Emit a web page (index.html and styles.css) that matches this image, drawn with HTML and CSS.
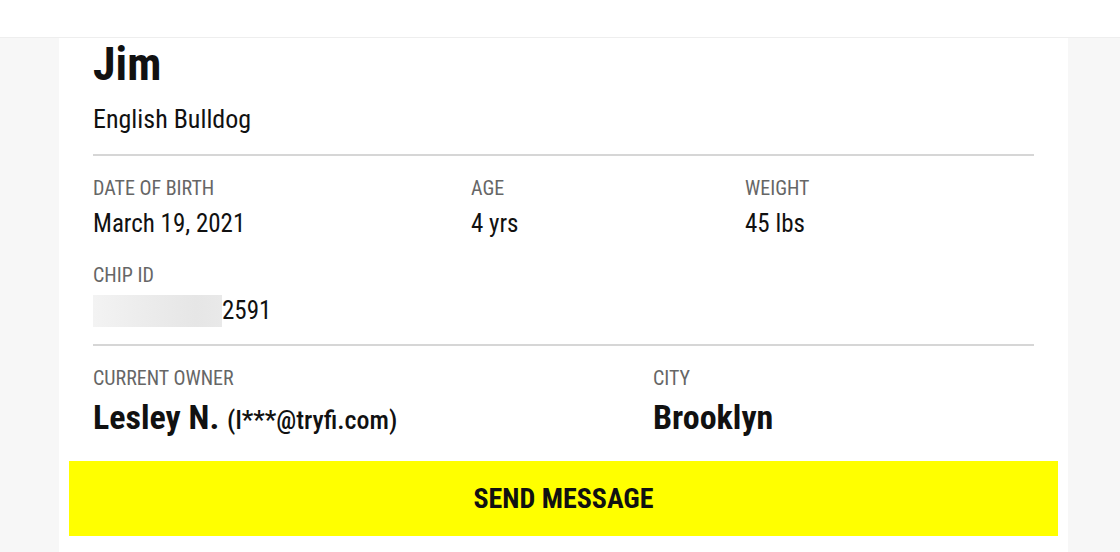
FILE: index.html
```html
<!DOCTYPE html>
<html lang="en">
<head>
<meta charset="utf-8">
<title>Jim - Pet Profile</title>
<link rel="stylesheet" href="styles.css">
</head>
<body>
<header class="topbar"></header>
<main class="card">
  <section class="pet">
    <h1 class="pet-name">Jim</h1>
    <p class="pet-breed">English Bulldog</p>
  </section>
  <section class="details details-pet">
    <div class="field">
      <div class="label">DATE OF BIRTH</div>
      <div class="value">March 19, 2021</div>
    </div>
    <div class="field">
      <div class="label">AGE</div>
      <div class="value">4 yrs</div>
    </div>
    <div class="field">
      <div class="label">WEIGHT</div>
      <div class="value">45 lbs</div>
    </div>
    <div class="field field-chip">
      <div class="label">CHIP ID</div>
      <div class="value chip"><span class="blur"></span>2591</div>
    </div>
  </section>
  <section class="details details-owner">
    <div class="field">
      <div class="label">CURRENT OWNER</div>
      <div class="value big">Lesley N. <span class="email">(l***@tryfi.com)</span></div>
    </div>
    <div class="field">
      <div class="label">CITY</div>
      <div class="value big">Brooklyn</div>
    </div>
  </section>
  <button class="send" type="button">SEND MESSAGE</button>
</main>
</body>
</html>
```
FILE: styles.css
```css
html, body {
  margin: 0;
  padding: 0;
}
body {
  background: #f7f7f7;
  font-family: "Roboto Condensed", "Liberation Sans Narrow", "DejaVu Sans Condensed", "Liberation Sans", sans-serif;
  color: #111;
  height: 552px;
  overflow: hidden;
}
.topbar {
  height: 37px;
  background: #fff;
  border-bottom: 1px solid #eeeeee;
}
.card {
  background: #fff;
  margin: 0 52px 0 59px;
  padding: 0 34px;
  min-height: 520px;
  display: flex;
  flex-direction: column;
}
.pet {
  padding-bottom: 20px;
  border-bottom: 2px solid #d6d6d6;
}
.pet-name {
  margin: 0;
  font-size: 46px;
  line-height: 52px;
  font-weight: 700;
}
.pet-breed {
  margin: 14px 0 0;
  font-size: 26px;
  line-height: 30px;
}
.details {
  display: grid;
  padding: 20px 0 18px;
}
.details-pet {
  grid-template-columns: 378px 274px 1fr;
  row-gap: 23px;
  padding-bottom: 17px;
  border-bottom: 2px solid #d6d6d6;
}
.details-owner {
  grid-template-columns: 560px 1fr;
  padding-bottom: 20px;
}
.field-chip {
  grid-column: 1 / -1;
}
.label {
  font-size: 20px;
  line-height: 24px;
  color: #666;
}
.value {
  font-size: 25px;
  line-height: 32px;
  margin-top: 8px;
}
.chip {
  display: flex;
  align-items: center;
}
.blur {
  display: inline-block;
  width: 129px;
  height: 32px;
  background: linear-gradient(90deg, #f3f3f3, #ececec 40%, #e6e6e6 80%, #e9e9e9);
}
.value.big {
  font-size: 34px;
  line-height: 42px;
  font-weight: 700;
  margin-top: 6px;
}
.email {
  font-size: 26px;
  font-weight: 500;
}
.send {
  margin: 0 -24px;
  height: 75px;
  border: none;
  background: #ffff00;
  font-family: inherit;
  font-size: 28px;
  font-weight: 700;
  color: #111;
  cursor: pointer;
}
```
